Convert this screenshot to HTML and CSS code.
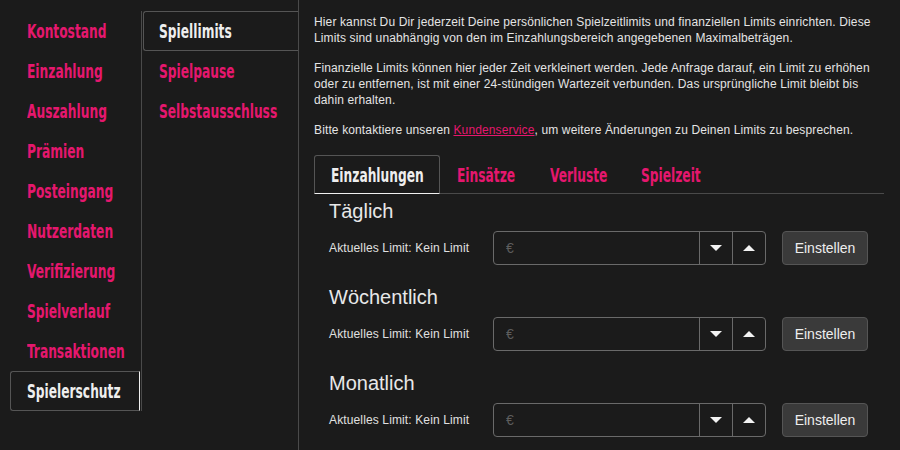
FILE: index.html
```html
<!DOCTYPE html>
<html>
  <head>
    <title>Spielerschutz</title>
    <link rel="stylesheet" href="styles.css">
  </head>
  <body>
    <div class="page">
      <nav class="main-nav">
        <ul>
          <li><a href="#">Kontostand</a></li>
          <li><a href="#">Einzahlung</a></li>
          <li><a href="#">Auszahlung</a></li>
          <li><a href="#">Prämien</a></li>
          <li><a href="#">Posteingang</a></li>
          <li><a href="#">Nutzerdaten</a></li>
          <li><a href="#">Verifizierung</a></li>
          <li><a href="#">Spielverlauf</a></li>
          <li><a href="#">Transaktionen</a></li>
          <li class="active"><a href="#">Spielerschutz</a></li>
        </ul>
      </nav>
      <nav class="sub-nav">
        <ul>
          <li class="active"><a href="#">Spiellimits</a></li>
          <li><a href="#">Spielpause</a></li>
          <li><a href="#">Selbstausschluss</a></li>
        </ul>
      </nav>
      <main class="content">
        <p>Hier kannst Du Dir jederzeit Deine persönlichen Spielzeitlimits und finanziellen Limits einrichten. Diese Limits sind unabhängig von den im Einzahlungsbereich angegebenen Maximalbeträgen.</p>
        <p>Finanzielle Limits können hier jeder Zeit verkleinert werden. Jede Anfrage darauf, ein Limit zu erhöhen oder zu entfernen, ist mit einer 24-stündigen Wartezeit verbunden. Das ursprüngliche Limit bleibt bis dahin erhalten.</p>
        <p>Bitte kontaktiere unseren <a href="#">Kundenservice</a>, um weitere Änderungen zu Deinen Limits zu besprechen.</p>

        <div class="tabs">
          <div class="tab active"><span>Einzahlungen</span></div>
          <div class="tab"><span>Einsätze</span></div>
          <div class="tab"><span>Verluste</span></div>
          <div class="tab"><span>Spielzeit</span></div>
        </div>

        <div class="limits">
          <div class="limit">
            <h3>Täglich</h3>
            <div class="limit-row">
              <span class="current">Aktuelles Limit: Kein Limit</span>
              <div class="amount">
                <input type="text" placeholder="€">
                <button class="spin"><span class="arrow-down"></span></button>
                <button class="spin"><span class="arrow-up"></span></button>
              </div>
              <button class="set">Einstellen</button>
            </div>
          </div>
          <div class="limit">
            <h3>Wöchentlich</h3>
            <div class="limit-row">
              <span class="current">Aktuelles Limit: Kein Limit</span>
              <div class="amount">
                <input type="text" placeholder="€">
                <button class="spin"><span class="arrow-down"></span></button>
                <button class="spin"><span class="arrow-up"></span></button>
              </div>
              <button class="set">Einstellen</button>
            </div>
          </div>
          <div class="limit">
            <h3>Monatlich</h3>
            <div class="limit-row">
              <span class="current">Aktuelles Limit: Kein Limit</span>
              <div class="amount">
                <input type="text" placeholder="€">
                <button class="spin"><span class="arrow-down"></span></button>
                <button class="spin"><span class="arrow-up"></span></button>
              </div>
              <button class="set">Einstellen</button>
            </div>
          </div>
        </div>
      </main>
    </div>
  </body>
</html>
```

FILE: styles.css
```css
body {
  margin: 0;
  width: 100%;
  height: 100vh;
  background-color: #1b1b1b;
  color: #e4e4e4;
  font-family: "Liberation Sans", Arial, sans-serif;
  overflow: hidden;
}
ul {
  list-style: none;
  margin: 0;
  padding: 0;
}
a {
  text-decoration: none;
}
.page {
  display: flex;
  height: 100vh;
}

/* condensed display font, squeezed to the narrow look */
.main-nav,
.sub-nav,
.tabs {
  font-family: "DejaVu Sans Condensed", "DejaVu Sans", sans-serif;
  font-stretch: condensed;
  font-weight: bold;
  font-size: 20px;
  white-space: nowrap;
}
.main-nav li a,
.sub-nav li a,
.tab span {
  display: inline-block;
  transform: scaleX(0.68);
  transform-origin: left center;
}

/* nav columns */
.main-nav li a,
.sub-nav li a {
  color: #e5176e;
}
.main-nav li.active a,
.sub-nav li.active a {
  color: #eeeeee;
}
.main-nav ul {
  margin: 11px 0 0 10px;
  width: 131px;
  border-right: 1px solid #4a4a4a;
}
.main-nav li {
  box-sizing: border-box;
  width: 130px;
  height: 40px;
  display: flex;
  align-items: center;
  padding-left: 16px;
  border: 1px solid transparent;
}
.main-nav li.active {
  border-color: #555;
  border-right-color: #f0f0f0;
  border-radius: 3px 0 0 3px;
}
.sub-nav {
  width: 156px;
  border-right: 1px solid #4a4a4a;
}
.sub-nav ul {
  margin: 11px 0 0 1px;
}
.sub-nav li {
  box-sizing: border-box;
  height: 40px;
  display: flex;
  align-items: center;
  padding-left: 15px;
  border: 1px solid transparent;
  border-right: none;
}
.sub-nav li.active {
  border-color: #555;
  border-radius: 3px 0 0 3px;
}

/* content */
.content {
  flex: 1;
  padding: 14px 17px 0 15px;
  font-size: 12px;
  line-height: 16px;
  letter-spacing: 0.13px;
}
.content p {
  margin: 0 0 14px;
}
.content p a {
  color: #e5176e;
  text-decoration: underline;
}
.tabs {
  display: flex;
  height: 38px;
  margin-top: 17px;
  border-bottom: 1px solid #4a4a4a;
  letter-spacing: 0;
}
.tab {
  box-sizing: border-box;
  display: flex;
  align-items: center;
  padding-left: 16px;
  color: #e5176e;
  border: 1px solid transparent;
  border-bottom: none;
}
.tab:nth-child(1) { width: 126px; }
.tab:nth-child(2) { width: 93px; }
.tab:nth-child(3) { width: 91px; }
.tab:nth-child(4) { width: 94px; }
.tab.active {
  color: #eeeeee;
  border-color: #555;
  border-bottom: 1px solid #f0f0f0;
  margin-bottom: -1px;
  border-radius: 3px 3px 0 0;
}
.limits {
  padding: 5px 16px 0 15px;
}
.limit {
  margin-bottom: 20px;
}
.limit h3 {
  margin: 0 0 8px;
  font-size: 20px;
  line-height: 24px;
  font-weight: normal;
  color: #e8e8e8;
  letter-spacing: 0;
}
.limit-row {
  display: flex;
  align-items: center;
  gap: 16px;
  height: 34px;
}
.current {
  width: 148px;
  color: #e0e0e0;
}
.amount {
  flex: 1;
  display: flex;
  height: 34px;
  box-sizing: border-box;
  border: 1px solid #6a6a6a;
  border-radius: 4px;
}
.amount input {
  flex: 1;
  min-width: 0;
  background: transparent;
  border: none;
  outline: none;
  padding: 0 12px;
  font-family: "Liberation Sans", Arial, sans-serif;
  font-size: 14px;
  color: #ddd;
}
.amount input::placeholder {
  color: #5e5e5e;
}
.spin {
  width: 33px;
  background: transparent;
  border: none;
  border-left: 1px solid #6a6a6a;
  display: grid;
  place-items: center;
  padding: 0;
}
.arrow-down {
  width: 0;
  height: 0;
  border-left: 6px solid transparent;
  border-right: 6px solid transparent;
  border-top: 6px solid #f2f2f2;
}
.arrow-up {
  width: 0;
  height: 0;
  border-left: 6px solid transparent;
  border-right: 6px solid transparent;
  border-bottom: 6px solid #f2f2f2;
}
.set {
  width: 86px;
  height: 34px;
  background-color: #3a3a3a;
  border: 1px solid #555;
  border-radius: 4px;
  color: #eeeeee;
  font-family: "Liberation Sans", Arial, sans-serif;
  font-size: 14px;
  letter-spacing: 0;
  padding: 0;
}
```
